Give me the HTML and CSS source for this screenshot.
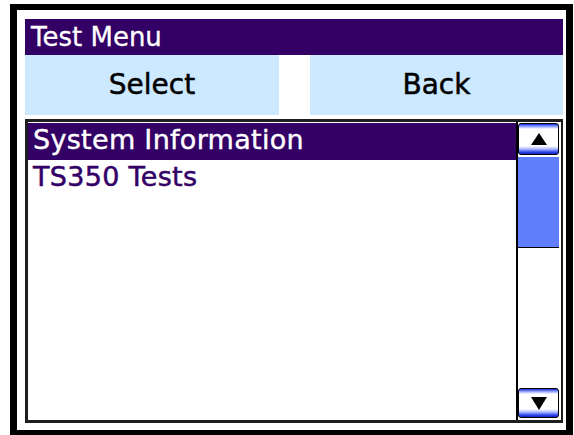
FILE: index.html
```html
<!DOCTYPE html>
<html>
<head>
<meta charset="utf-8">
<title>Test Menu</title>
<link rel="stylesheet" href="styles.css">
</head>
<body>
<div class="screen">
  <div class="title-bar">Test Menu</div>
  <div class="soft-keys">
    <div class="soft-key">Select</div>
    <div class="soft-key">Back</div>
  </div>
  <div class="list-box">
    <ul class="list">
      <li class="item selected">System Information</li>
      <li class="item">TS350 Tests</li>
    </ul>
    <div class="scrollbar">
      <div class="scroll-btn"><span class="arrow up"></span></div>
      <div class="thumb"></div>
      <div class="track"></div>
      <div class="scroll-btn"><span class="arrow down"></span></div>
    </div>
  </div>
</div>
</body>
</html>
```
FILE: styles.css
```css
html, body {
  margin: 0;
  padding: 0;
  background: #fff;
  overflow: hidden;
}

body {
  font-family: "DejaVu Sans", Verdana, sans-serif;
}

/* device frame */
.screen {
  margin: 4px 0 0 10px;
  width: 538px;
  height: 404px;
  border-style: solid;
  border-color: #000;
  border-width: 6px 7px 6px 7px;
  padding: 9px 3px 7px 8px;
  display: flex;
  flex-direction: column;
}

.title-bar {
  height: 36px;
  line-height: 36px;
  background: #330066;
  color: #fff;
  font-size: 26px;
  padding-left: 6px;
  -webkit-text-stroke: 0.3px #fff;
  flex: none;
}

.soft-keys {
  height: 60px;
  display: grid;
  grid-template-columns: 254px 1fr 253px;
  flex: none;
}

.soft-key {
  background: #cce9ff;
  color: #000;
  font-size: 28px;
  line-height: 60px;
  text-align: center;
  -webkit-text-stroke: 0.5px #000;
}

.soft-key:last-child {
  grid-column: 3;
}

.list-box {
  margin-top: 4px;
  flex: 1;
  border: 3px solid #1e1e1e;
  border-right-width: 2px;
  display: flex;
  min-height: 0;
}

.list {
  list-style: none;
  margin: 0;
  padding: 1px 0 0;
  flex: 1;
}

.item {
  height: 37px;
  line-height: 33px;
  padding-left: 5px;
  font-size: 27px;
  letter-spacing: 0.3px;
  color: #330066;
  -webkit-text-stroke: 0.5px #330066;
  white-space: nowrap;
}

.item.selected {
  background: #330066;
  color: #fff;
  -webkit-text-stroke: 0.4px #fff;
}

.scrollbar {
  width: 41px;
  border-left: 2px solid #000;
  padding: 1px 2px 2px 0;
  display: flex;
  flex-direction: column;
  gap: 2px;
}

.scroll-btn {
  height: 30px;
  border: 1px solid #000;
  border-radius: 3px;
  background: linear-gradient(to bottom,
    #1028d8 0, #7c8cff 2px, #fff 5px,
    #fff calc(100% - 8px), #b0bcff calc(100% - 5px),
    #3048f0 calc(100% - 2px), #1020c0 100%);
  display: flex;
  align-items: center;
  justify-content: center;
  flex: none;
}

.scroll-btn:last-child {
  height: 28px;
}

.arrow {
  width: 0;
  height: 0;
  border-left: 8px solid transparent;
  border-right: 8px solid transparent;
}

.arrow.up {
  border-bottom: 12px solid #000;
}

.arrow.down {
  border-top: 13px solid #000;
}

.thumb {
  height: 90px;
  background: #5f7fff;
  border-bottom: 1px solid #000;
  flex: none;
}

.track {
  flex: 1;
  background: #fff;
}
```
